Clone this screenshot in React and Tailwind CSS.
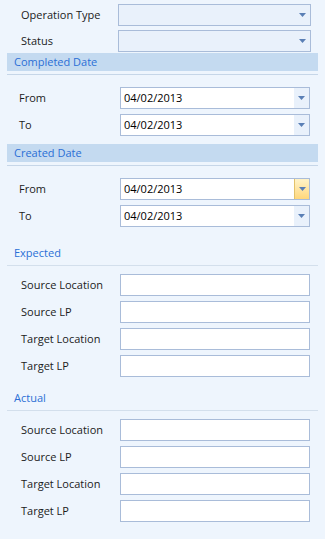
const font = { fontFamily: '"Open Sans", "Noto Sans", sans-serif' };

function Arrow() {
  return (
    <svg width="7" height="4" viewBox="0 0 7 4" className="block">
      <path d="M0 0h7L3.5 4z" fill="#5a7fb5" />
    </svg>
  );
}

function Combo({ value, disabled, hot }) {
  return (
    <div
      className={`flex h-[22px] border ${disabled ? 'border-[#a9bcd9] bg-[#e9f1fb]' : 'border-[#a9bcd9] bg-white'}`}
    >
      <div className="flex-1 pl-[3px] text-[11px] leading-[20px] text-black">{value}</div>
      <div
        className={`flex w-[15px] items-center justify-center ${
          hot ? 'border-l border-[#e3c26b] bg-gradient-to-b from-[#fff3c8] to-[#ffd77a]' : disabled ? '' : 'bg-[#e9f1fb]'
        }`}
      >
        <Arrow />
      </div>
    </div>
  );
}

function Row({ label, children, labelX = 'pl-[21px]', w = 'w-[118px]' }) {
  return (
    <div className="flex items-center">
      <div className={`${w} ${labelX} text-[11px] text-[#1b1b1b]`}>{label}</div>
      {children}
    </div>
  );
}

function BarHeader({ title }) {
  return (
    <div className="px-[7px]">
      <div className="h-[18px] bg-[#c4daf0] pl-[7px] text-[11px] leading-[18px] text-[#2b6fd6]">{title}</div>
      <div className="mt-[3px] h-px bg-[#c6d6e8]" />
    </div>
  );
}

function GroupHeader({ title }) {
  return (
    <div className="px-[7px]">
      <div className="h-[18px] pl-[7px] text-[11px] leading-[18px] text-[#2b6fd6]">{title}</div>
      <div className="mt-[3px] h-px bg-[#d3dfec]" />
    </div>
  );
}

function TextBox() {
  return <div className="h-[22px] w-[190px] border border-[#a9bcd9] bg-white" />;
}

function Fields() {
  return (
    <div className="mt-[8px] flex flex-col gap-[5px]">
      {['Source Location', 'Source LP', 'Target Location', 'Target LP'].map((l) => (
        <Row key={l} label={l} w="w-[120px]">
          <TextBox />
        </Row>
      ))}
    </div>
  );
}

export default function App() {
  return (
    <div className="h-[539px] w-[325px] overflow-hidden bg-[#eef5fd]" style={font}>
      <div className="flex flex-col gap-[4px] pt-[4px]">
        <Row label="Operation Type">
          <div className="w-[193px]">
            <Combo disabled />
          </div>
        </Row>
        <Row label="Status">
          <div className="w-[193px]">
            <Combo disabled />
          </div>
        </Row>
      </div>

      <div className="mt-[1px]">
        <BarHeader title="Completed Date" />
      </div>
      <div className="mt-[12px] flex flex-col gap-[5px]">
        <Row label="From" labelX="pl-[19px]" w="w-[120px]">
          <div className="w-[190px]">
            <Combo value="04/02/2013" />
          </div>
        </Row>
        <Row label="To" labelX="pl-[19px]" w="w-[120px]">
          <div className="w-[190px]">
            <Combo value="04/02/2013" />
          </div>
        </Row>
      </div>

      <div className="mt-[8px]">
        <BarHeader title="Created Date" />
      </div>
      <div className="mt-[12px] flex flex-col gap-[5px]">
        <Row label="From" labelX="pl-[19px]" w="w-[120px]">
          <div className="w-[190px]">
            <Combo value="04/02/2013" hot />
          </div>
        </Row>
        <Row label="To" labelX="pl-[19px]" w="w-[120px]">
          <div className="w-[190px]">
            <Combo value="04/02/2013" />
          </div>
        </Row>
      </div>

      <div className="mt-[17px]">
        <GroupHeader title="Expected" />
      </div>
      <Fields />

      <div className="mt-[12px]">
        <GroupHeader title="Actual" />
      </div>
      <Fields />
    </div>
  );
}
